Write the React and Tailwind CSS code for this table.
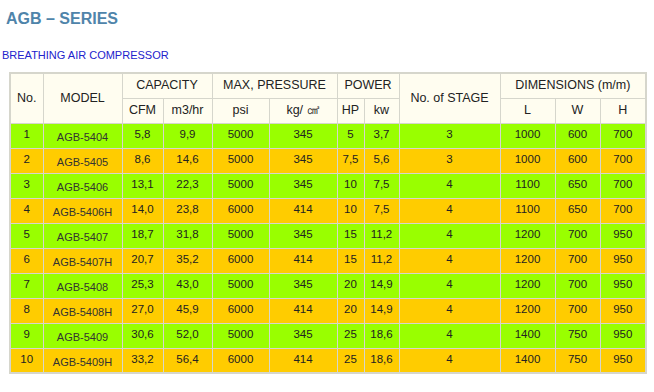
const rows = [
  ['1', 'AGB-5404', '5,8', '9,9', '5000', '345', '5', '3,7', '3', '1000', '600', '700'],
  ['2', 'AGB-5405', '8,6', '14,6', '5000', '345', '7,5', '5,6', '3', '1000', '600', '700'],
  ['3', 'AGB-5406', '13,1', '22,3', '5000', '345', '10', '7,5', '4', '1100', '650', '700'],
  ['4', 'AGB-5406H', '14,0', '23,8', '6000', '414', '10', '7,5', '4', '1100', '650', '700'],
  ['5', 'AGB-5407', '18,7', '31,8', '5000', '345', '15', '11,2', '4', '1200', '700', '950'],
  ['6', 'AGB-5407H', '20,7', '35,2', '6000', '414', '15', '11,2', '4', '1200', '700', '950'],
  ['7', 'AGB-5408', '25,3', '43,0', '5000', '345', '20', '14,9', '4', '1200', '700', '950'],
  ['8', 'AGB-5408H', '27,0', '45,9', '6000', '414', '20', '14,9', '4', '1200', '700', '950'],
  ['9', 'AGB-5409', '30,6', '52,0', '5000', '345', '25', '18,6', '4', '1400', '750', '950'],
  ['10', 'AGB-5409H', '33,2', '56,4', '6000', '414', '25', '18,6', '4', '1400', '750', '950'],
];

const widths = [33, 79, 41, 49, 57, 68, 27, 35, 101, 55, 45, 46];

const th = 'border border-[#d6d6cc] font-normal text-center align-middle';

export default function App() {
  return (
    <div className="w-[654px] h-[392px] bg-white text-[#222] font-['Liberation_Sans',Arial,sans-serif]">
      <div className="pl-[6px] pt-[7px] h-[43px]">
        <h1 className="text-[16px] font-bold text-[#4f84aa] leading-[24px]">AGB – SERIES</h1>
      </div>
      <div className="pl-[2px] h-[24px] text-[11px] leading-[24px] text-[#2222cc]">BREATHING AIR COMPRESSOR</div>
      <div className="pl-[9px] pt-[5px]">
        <table className="table-fixed border-collapse w-[636px] border-2 border-[#d6d6cc] text-[11.5px]">
          <colgroup>
            {widths.map((w, i) => (
              <col key={i} style={{ width: w }} />
            ))}
          </colgroup>
          <thead className="bg-[#fffdf0] text-[12.5px]">
            <tr className="h-[25px]">
              <th rowSpan={2} className={th}>No.</th>
              <th rowSpan={2} className={th}>MODEL</th>
              <th colSpan={2} className={th}>CAPACITY</th>
              <th colSpan={2} className={th}>MAX, PRESSURE</th>
              <th colSpan={2} className={th}>POWER</th>
              <th rowSpan={2} className={th}>No. of STAGE</th>
              <th colSpan={3} className={th}>DIMENSIONS (m/m)</th>
            </tr>
            <tr className="h-[25px]">
              <th className={th}>CFM</th>
              <th className={th}>m3/hr</th>
              <th className={th}>psi</th>
              <th className={th}>kg/ ㎠</th>
              <th className={th}>HP</th>
              <th className={th}>kw</th>
              <th className={th}>L</th>
              <th className={th}>W</th>
              <th className={th}>H</th>
            </tr>
          </thead>
          <tbody>
            {rows.map((r, i) => (
              <tr key={r[0]} className={`h-[25px] ${i % 2 === 0 ? 'bg-[#99ff00]' : 'bg-[#ffcc00]'}`}>
                {r.map((c, j) => (
                  <td
                    key={j}
                    className={
                      j === 1
                        ? 'border border-[#d6d6cc] text-center align-middle pt-[3px] text-[#333] text-[11px]'
                        : 'border border-[#d6d6cc] text-center align-middle pb-[2px]'
                    }
                  >
                    {c}
                  </td>
                ))}
              </tr>
            ))}
          </tbody>
        </table>
      </div>
    </div>
  );
}
